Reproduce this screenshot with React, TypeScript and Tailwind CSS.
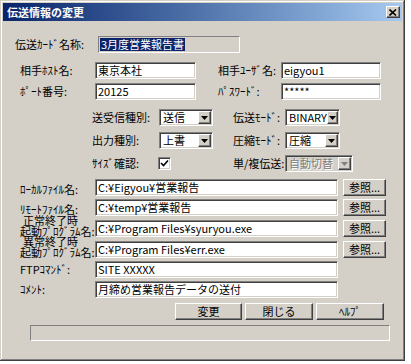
import React from 'react';

const font = { fontFamily: '"Noto Sans CJK JP", "MS UI Gothic", sans-serif' };

const sunken =
  'border border-t-[#808080] border-l-[#808080] border-b-white border-r-white shadow-[inset_1px_1px_0_#404040,inset_-1px_-1px_0_#d4d0c8]';
const raised =
  'border border-t-white border-l-white border-b-[#404040] border-r-[#404040] shadow-[inset_-1px_-1px_0_#808080]';

function Label({ text, className = '' }: { text: string; className?: string }) {
  return <div className={`shrink-0 text-[11px] leading-[13px] text-black whitespace-nowrap ${className}`}>{text}</div>;
}

function Field({ value, className = '' }: { value: string; className?: string }) {
  return (
    <div className={`h-[17px] shrink-0 bg-white ${sunken} flex items-center px-[2px] text-[11px] leading-[13px] text-black whitespace-nowrap overflow-hidden ${className}`}>
      {value}
    </div>
  );
}

function Arrow({ color = '#000' }: { color?: string }) {
  return (
    <svg width="7" height="4" viewBox="0 0 7 4">
      <path d="M0 0h7L3.5 4z" fill={color} />
    </svg>
  );
}

function Select({ value, className = '', disabled = false }: { value: string; className?: string; disabled?: boolean }) {
  return (
    <div className={`h-[17px] shrink-0 ${disabled ? 'bg-[#d4d0c8]' : 'bg-white'} ${sunken} flex items-center text-[11px] leading-[13px] ${className}`}>
      <span className={`flex-1 pl-[3px] whitespace-nowrap ${disabled ? 'text-[#808080] [text-shadow:1px_1px_0_#fff]' : 'text-black'}`}>{value}</span>
      <span className={`w-[13px] h-[13px] mr-[1px] bg-[#d4d0c8] ${raised} flex items-center justify-center`}>
        <Arrow color={disabled ? '#808080' : '#000'} />
      </span>
    </div>
  );
}

function Button({ text, className = '' }: { text: string; className?: string }) {
  return (
    <div className={`h-[17px] shrink-0 bg-[#d4d0c8] ${raised} flex items-center justify-center text-[11px] leading-[13px] text-black ${className}`}>
      {text}
    </div>
  );
}

function FileRow({ label, value, className = '' }: { label: React.ReactNode; value: string; className?: string }) {
  return (
    <div className={`flex items-end pl-[17px] ${className}`}>
      <div className="w-[75px] shrink-0">{label}</div>
      <Field value={value} className="w-[243px]" />
      <Button text="参照..." className="w-[43px] ml-[5px]" />
    </div>
  );
}

function TwoLine({ a, b }: { a: string; b: string }) {
  return (
    <div className="text-[11px] leading-[11px] text-black whitespace-nowrap">
      <div className="pl-[3px]">{a}</div>
      <div>{b}</div>
    </div>
  );
}

export default function App() {
  return (
    <div className="w-[411px] h-[364px] bg-white" style={font}>
      <div className="w-[405px] h-[361px] bg-[#d4d0c8] p-[3px] shadow-[inset_-1px_-1px_0_#404040,inset_1px_1px_0_#d4d0c8,inset_-2px_-2px_0_#808080,inset_2px_2px_0_#fff] flex flex-col">
        {/* title bar */}
        <div className="h-[18px] shrink-0 bg-gradient-to-r from-[#0a246a] to-[#a6caf0] flex items-center justify-between pl-[4px] pr-[2px]">
          <span className="text-[11px] font-bold text-white leading-none">伝送情報の変更</span>
          <span className={`w-[14px] h-[12px] bg-[#d4d0c8] ${raised} flex items-center justify-center`}>
            <svg width="8" height="7" viewBox="0 0 8 7">
              <path d="M0.5 0.5L7 6.5M7 0.5L0.5 6.5" stroke="#000" strokeWidth="1.6" />
            </svg>
          </span>
        </div>

        {/* card name */}
        <div className="flex items-center pl-[12px] mt-[15px]">
          <Label text="伝送ｶｰﾄﾞ名称:" className="w-[83px]" />
          <div className="h-[17px] w-[142px] border border-t-[#808080] border-l-[#808080] border-b-white border-r-white flex items-center pl-[1px] text-[11px]">
            <span className="bg-[#0a246a] text-white leading-[13px] px-[1px]">3月度営業報告書</span>
          </div>
        </div>

        {/* host / user */}
        <div className="flex items-center pl-[17px] mt-[9px]">
          <Label text="相手ﾎｽﾄ名:" className="w-[75px]" />
          <Field value="東京本社" className="w-[101px]" />
          <Label text="相手ﾕｰｻﾞ名:" className="w-[63px] ml-[22px]" />
          <Field value="eigyou1" className="w-[100px]" />
        </div>

        {/* port / password */}
        <div className="flex items-center pl-[17px] mt-[4px]">
          <Label text="ﾎﾟｰﾄ番号:" className="w-[75px]" />
          <Field value="20125" className="w-[101px]" />
          <Label text="ﾊﾟｽﾜｰﾄﾞ:" className="w-[63px] ml-[22px]" />
          <Field value="*****" className="w-[100px]" />
        </div>

        {/* selects */}
        <div className="flex items-center pl-[89px] mt-[9px]">
          <Label text="送受信種別:" className="w-[67px]" />
          <Select value="送信" className="w-[54px]" />
          <Label text="伝送ﾓｰﾄﾞ:" className="w-[52px] ml-[20px]" />
          <Select value="BINARY" className="w-[55px]" />
        </div>
        <div className="flex items-center pl-[89px] mt-[6px]">
          <Label text="出力種別:" className="w-[67px]" />
          <Select value="上書" className="w-[54px]" />
          <Label text="圧縮ﾓｰﾄﾞ:" className="w-[52px] ml-[20px]" />
          <Select value="圧縮" className="w-[55px]" />
        </div>
        <div className="flex items-center pl-[89px] mt-[6px]">
          <Label text="ｻｲｽﾞ確認:" className="w-[66px]" />
          <span className={`w-[13px] h-[13px] bg-white ${sunken} flex items-center justify-center`}>
            <svg width="9" height="9" viewBox="0 0 9 9">
              <path d="M1 4l2.5 2.5L8 1.5" stroke="#000" strokeWidth="1.6" fill="none" />
            </svg>
          </span>
          <Label text="単/複伝送:" className="w-[52px] ml-[62px]" />
          <Select value="自動切替" disabled className="w-[68px]" />
        </div>

        {/* files */}
        <FileRow label={<Label text="ﾛｰｶﾙﾌｧｲﾙ名:" />} value="C:¥Eigyou¥営業報告" className="mt-[7px]" />
        <FileRow label={<Label text="ﾘﾓｰﾄﾌｧｲﾙ名:" />} value="C:¥temp¥営業報告" className="mt-[3px]" />
        <FileRow label={<TwoLine a="正常終了時" b="起動ﾌﾟﾛｸﾞﾗﾑ名:" />} value="C:¥Program Files¥syuryou.exe" className="-mt-[1px]" />
        <FileRow label={<TwoLine a="異常終了時" b="起動ﾌﾟﾛｸﾞﾗﾑ名:" />} value="C:¥Program Files¥err.exe" className="-mt-[1px]" />

        <div className="flex items-center pl-[17px] mt-[3px]">
          <Label text="FTPｺﾏﾝﾄﾞ:" className="w-[75px]" />
          <Field value="SITE XXXXX" className="w-[243px]" />
        </div>
        <div className="flex items-center pl-[17px] mt-[3px]">
          <Label text="ｺﾒﾝﾄ:" className="w-[75px]" />
          <Field value="月締め営業報告データの送付" className="w-[243px]" />
        </div>

        {/* buttons */}
        <div className="flex pl-[172px] gap-[3px] mt-[5px]">
          <Button text="変更" className="w-[67px]" />
          <Button text="閉じる" className="w-[68px]" />
          <Button text="ﾍﾙﾌﾟ" className="w-[68px]" />
        </div>

        {/* status */}
        <div className="ml-[27px] mt-[5px] w-[360px] h-[16px] border border-t-[#808080] border-l-[#808080] border-b-white border-r-white" />
      </div>
    </div>
  );
}
